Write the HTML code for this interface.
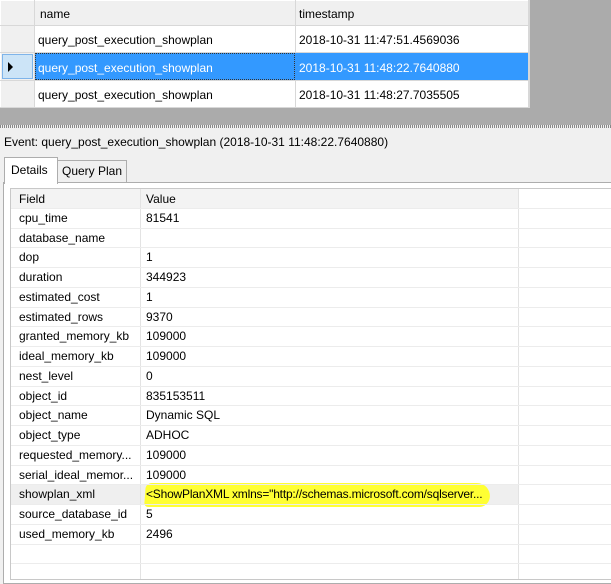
<!DOCTYPE html><html><head><style>
body{margin:0;width:611px;height:573px;overflow:hidden;background:#f0f0f0;font-family:"Liberation Sans",sans-serif;font-size:12px;color:#000;position:relative}
.a{position:absolute}
.t{position:absolute;white-space:nowrap}
.l{position:absolute;left:11px;width:600px;height:1px;background:#ececec}
.f{position:absolute;white-space:nowrap;left:19px}
.v{position:absolute;white-space:nowrap;left:146px}
</style></head><body>
<div class="a" style="left:0;top:0;width:611px;height:125px;background:#ababab"></div>
<div class="a" style="left:0;top:0;width:530px;height:108px;background:#fff"></div>
<div class="a" style="left:1px;top:1px;width:33px;height:106px;background:#f0f0f0"></div>
<div class="a" style="left:35px;top:1px;width:493px;height:24px;background:#f0f0f0"></div>
<div class="a" style="left:0;top:25px;width:530px;height:1px;background:#d8d8d8"></div>
<div class="a" style="left:0;top:52px;width:530px;height:1px;background:#d8d8d8"></div>
<div class="a" style="left:0;top:80px;width:530px;height:1px;background:#d8d8d8"></div>
<div class="a" style="left:0;top:107px;width:530px;height:1px;background:#d8d8d8"></div>
<div class="a" style="left:34px;top:0;width:1px;height:108px;background:#d8d8d8"></div>
<div class="a" style="left:295px;top:0;width:1px;height:108px;background:#d8d8d8"></div>
<div class="a" style="left:528px;top:0;width:2px;height:108px;background:#d8d8d8"></div>
<div class="a" style="left:2px;top:54px;width:31px;height:25px;background:#cce4f7;border:1px solid #7eb4ea;box-sizing:border-box"></div>
<div class="a" style="left:8px;top:62px;width:0;height:0;border-left:5px solid #000;border-top:5px solid transparent;border-bottom:5px solid transparent"></div>
<div class="a" style="left:35px;top:53px;width:493px;height:27px;background:#3399ff"></div>
<div class="a" style="left:35px;top:53px;width:260px;height:27px;border:1px dotted #333;box-sizing:border-box"></div>
<div class="t" style="left:40px;top:7px">name</div>
<div class="t" style="left:299px;top:7px">timestamp</div>
<div class="t" style="left:38px;top:33px">query_post_execution_showplan</div>
<div class="t" style="left:299px;top:33px">2018-10-31 11:47:51.4569036</div>
<div class="t" style="left:38px;top:61px;color:#fff">query_post_execution_showplan</div>
<div class="t" style="left:299px;top:61px;color:#fff">2018-10-31 11:48:22.7640880</div>
<div class="t" style="left:38px;top:88px">query_post_execution_showplan</div>
<div class="t" style="left:299px;top:88px">2018-10-31 11:48:27.7035505</div>
<div class="a" style="left:0;top:125px;width:611px;height:3px;background:repeating-linear-gradient(90deg,#888 0 1px,#f0f0f0 1px 2px)"></div>
<div class="t" style="left:4px;top:135px">Event: query_post_execution_showplan (2018-10-31 11:48:22.7640880)</div>
<div class="a" style="left:3px;top:182px;width:620px;height:400px;border:1px solid #adadad;background:#fff"></div>
<div class="a" style="left:57px;top:160px;width:70px;height:22px;border:1px solid #adadad;border-bottom:none;background:#f0f0f0;box-sizing:border-box"></div>
<div class="a" style="left:4px;top:157px;width:54px;height:27px;border:1px solid #adadad;border-bottom:none;background:#fff;box-sizing:border-box"></div>
<div class="t" style="left:11px;top:163px">Details</div>
<div class="t" style="left:62px;top:164px">Query Plan</div>
<div class="a" style="left:10px;top:188px;width:610px;height:390px;border:1px solid #c8c8c8;background:#fff"></div>
<div class="a" style="left:11px;top:189px;width:507px;height:19px;background:#f3f3f3"></div>
<div class="a" style="left:11px;top:484px;width:507px;height:20px;background:#efefef"></div>
<div class="a" style="left:145px;top:483px;width:345px;height:24px;background:#ffff33;border-radius:6px 14px 10px 4px;transform:skewX(-4deg)"></div>
<div class="a" style="left:140px;top:189px;width:1px;height:390px;background:#e3e3e3"></div>
<div class="a" style="left:518px;top:189px;width:1px;height:390px;background:#e3e3e3"></div>
<div class="l" style="top:208px"></div><div class="l" style="top:228px"></div><div class="l" style="top:247px"></div><div class="l" style="top:267px"></div><div class="l" style="top:287px"></div><div class="l" style="top:307px"></div><div class="l" style="top:326px"></div><div class="l" style="top:346px"></div><div class="l" style="top:366px"></div><div class="l" style="top:386px"></div><div class="l" style="top:405px"></div><div class="l" style="top:425px"></div><div class="l" style="top:445px"></div><div class="l" style="top:465px"></div><div class="l" style="top:484px"></div><div class="l" style="top:504px"></div><div class="l" style="top:524px"></div><div class="l" style="top:544px"></div><div class="l" style="top:563px"></div>
<div class="f" style="top:192px">Field</div><div class="v" style="top:192px">Value</div>
<div class="f" style="top:211px">cpu_time</div><div class="v" style="top:211px">81541</div>
<div class="f" style="top:231px">database_name</div>
<div class="f" style="top:250px">dop</div><div class="v" style="top:250px">1</div>
<div class="f" style="top:270px">duration</div><div class="v" style="top:270px">344923</div>
<div class="f" style="top:290px">estimated_cost</div><div class="v" style="top:290px">1</div>
<div class="f" style="top:310px">estimated_rows</div><div class="v" style="top:310px">9370</div>
<div class="f" style="top:329px">granted_memory_kb</div><div class="v" style="top:329px">109000</div>
<div class="f" style="top:349px">ideal_memory_kb</div><div class="v" style="top:349px">109000</div>
<div class="f" style="top:369px">nest_level</div><div class="v" style="top:369px">0</div>
<div class="f" style="top:389px">object_id</div><div class="v" style="top:389px">835153511</div>
<div class="f" style="top:408px">object_name</div><div class="v" style="top:408px">Dynamic SQL</div>
<div class="f" style="top:428px">object_type</div><div class="v" style="top:428px">ADHOC</div>
<div class="f" style="top:448px">requested_memory...</div><div class="v" style="top:448px">109000</div>
<div class="f" style="top:468px">serial_ideal_memor...</div><div class="v" style="top:468px">109000</div>
<div class="f" style="top:487px">showplan_xml</div><div class="v" style="top:487px;letter-spacing:-0.2px">&lt;ShowPlanXML xmlns="http://schemas.microsoft.com/sqlserver...</div>
<div class="f" style="top:507px">source_database_id</div><div class="v" style="top:507px">5</div>
<div class="f" style="top:527px">used_memory_kb</div><div class="v" style="top:527px">2496</div>
</body></html>
